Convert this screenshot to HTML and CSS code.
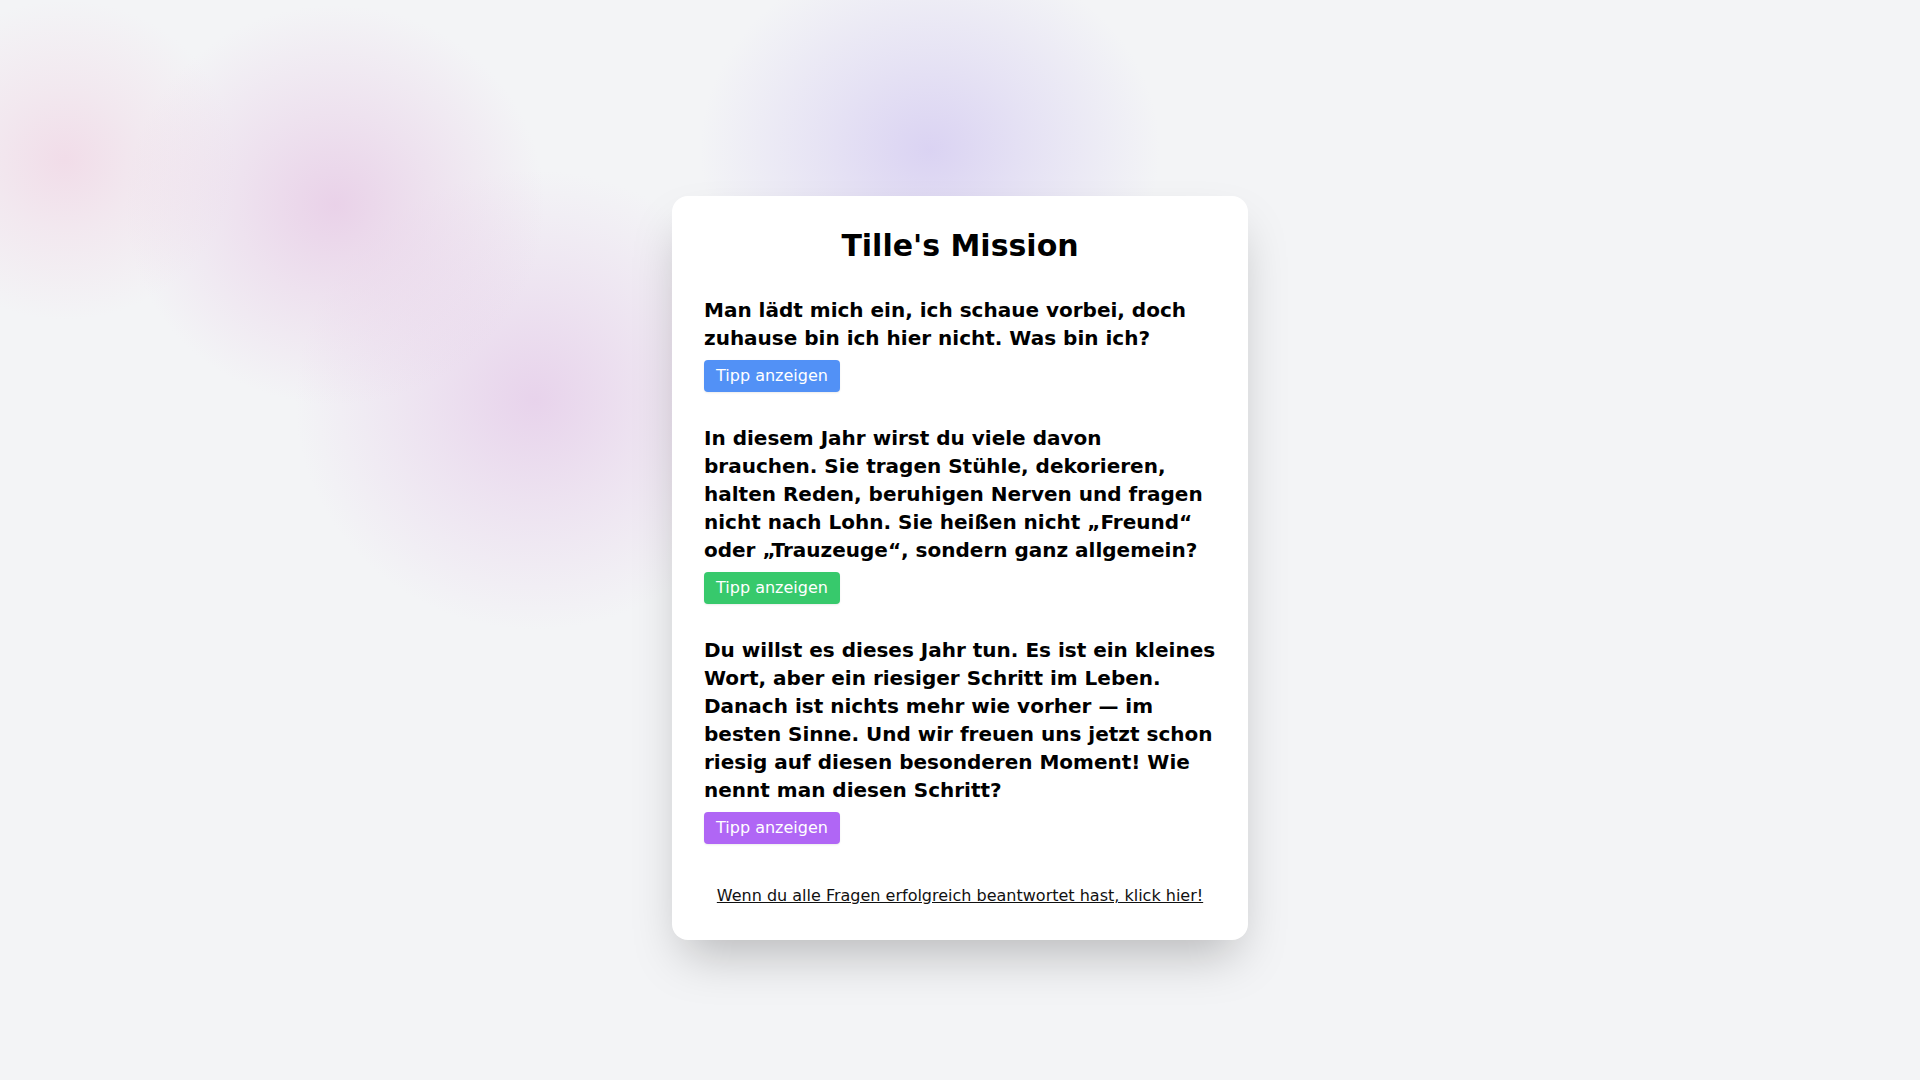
FILE: index.html
```html
<!DOCTYPE html>
<html lang="de">
<head>
<meta charset="utf-8">
<title>Tille's Mission</title>
<link rel="stylesheet" href="styles.css">
</head>
<body>
<main class="page">
  <section class="card">
    <h1 class="title">Tille's Mission</h1>
    <div class="questions">
      <div class="question">
        <p class="q-text">Man lädt mich ein, ich schaue vorbei, doch zuhause bin ich hier nicht. Was bin ich?</p>
        <button class="tip tip-blue">Tipp anzeigen</button>
      </div>
      <div class="question">
        <p class="q-text">In diesem Jahr wirst du viele davon brauchen. Sie tragen Stühle, dekorieren, halten Reden, beruhigen Nerven und fragen nicht nach Lohn. Sie heißen nicht „Freund“ oder „Trauzeuge“, sondern ganz allgemein?</p>
        <button class="tip tip-green">Tipp anzeigen</button>
      </div>
      <div class="question">
        <p class="q-text">Du willst es dieses Jahr tun. Es ist ein kleines Wort, aber ein riesiger Schritt im Leben. Danach ist nichts mehr wie vorher — im besten Sinne. Und wir freuen uns jetzt schon riesig auf diesen besonderen Moment! Wie nennt man diesen Schritt?</p>
        <button class="tip tip-purple">Tipp anzeigen</button>
      </div>
    </div>
    <div class="final">
      <a class="final-link" href="#">Wenn du alle Fragen erfolgreich beantwortet hast, klick hier!</a>
    </div>
  </section>
</main>
</body>
</html>
```

FILE: styles.css
```css
* { box-sizing: border-box; }
html, body { margin: 0; padding: 0; }
body {
  font-family: "DejaVu Sans", "Noto Sans", sans-serif;
  color: #000;
  min-height: 100vh;
  background-color: #f3f4f6;
  background-image:
    radial-gradient(ellipse 170px 160px at 65px 160px, rgba(240, 205, 224, 0.6) 0%, rgba(240, 205, 224, 0.3) 45%, rgba(240, 205, 224, 0) 100%),
    radial-gradient(ellipse 210px 200px at 335px 205px, rgba(230, 198, 228, 0.75) 0%, rgba(230, 198, 228, 0.4) 45%, rgba(230, 198, 228, 0) 100%),
    radial-gradient(ellipse 240px 230px at 535px 400px, rgba(228, 200, 232, 0.75) 0%, rgba(228, 200, 232, 0.4) 45%, rgba(228, 200, 232, 0) 100%),
    radial-gradient(ellipse 230px 200px at 930px 150px, rgba(214, 205, 242, 0.85) 0%, rgba(214, 205, 242, 0.45) 45%, rgba(214, 205, 242, 0) 100%);
}
.page {
  min-height: 100vh;
  padding-top: 56px;
  display: flex;
  align-items: center;
  justify-content: center;
}
.card {
  width: 576px;
  background: #fff;
  border-radius: 16px;
  padding: 32px;
  box-shadow: 0 25px 50px -12px rgba(0, 0, 0, 0.25);
}
.title {
  margin: 0 0 32px;
  font-size: 30px;
  line-height: 36px;
  font-weight: 700;
  text-align: center;
}
.questions {
  display: flex;
  flex-direction: column;
  gap: 32px;
}
.question {
  display: flex;
  flex-direction: column;
  align-items: flex-start;
  gap: 8px;
}
.q-text {
  margin: 0;
  font-size: 20px;
  line-height: 28px;
  font-weight: 700;
}
.tip {
  font-family: "DejaVu Sans", "Noto Sans", sans-serif;
  font-size: 16px;
  line-height: 24px;
  color: #fff;
  border: none;
  border-radius: 4px;
  padding: 4px 12px;
  box-shadow: 0 1px 2px rgba(0, 0, 0, 0.08);
  cursor: pointer;
}
.tip-blue { background: #5291f6; }
.tip-green { background: #37c96c; }
.tip-purple { background: #b066f5; }
.final {
  margin-top: 40px;
  text-align: center;
}
.final-link {
  font-size: 16px;
  line-height: 24px;
  color: #111;
  text-decoration: underline;
}
```
